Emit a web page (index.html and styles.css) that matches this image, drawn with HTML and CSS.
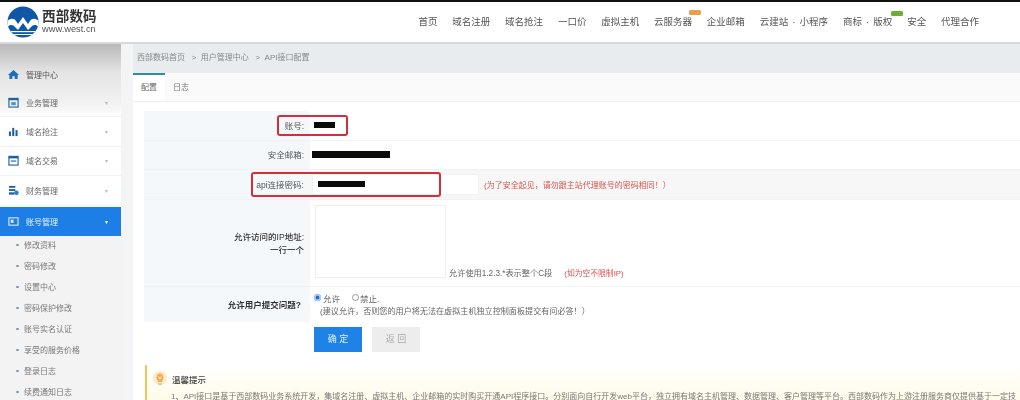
FILE: index.html
```html
<!DOCTYPE html>
<html lang="zh-CN">
<head>
<meta charset="utf-8">
<title>API接口配置</title>
<link rel="stylesheet" href="styles.css">
</head>
<body>
<div class="page">
  <header class="topbar">
    <div class="brand">
      <svg class="logo" viewBox="0 0 32 32" width="32" height="32">
        <defs><clipPath id="c"><circle cx="16" cy="16" r="15.5"/></clipPath></defs>
        <g clip-path="url(#c)">
          <rect width="32" height="32" fill="#0e56a6"/>
          <path d="M0 15 C4 12 7 12 9 15 L11 18 L16 11 L21 18 L23 15 C25 12 28 12 32 15 L32 21 C28 18 26 19 24 21 L21 24 L16 17 L11 24 L8 21 C6 19 4 18 0 21Z" fill="#fff"/>
          <rect y="25" width="32" height="1.2" fill="#fff"/>
          <rect y="28" width="32" height="1" fill="#fff"/>
        </g>
      </svg>
      <div class="brand-text">
        <div class="brand-name">西部数码</div>
        <div class="brand-url">www.west.cn</div>
      </div>
    </div>
    <nav class="nav">
      <a class="nav-item">首页</a>
      <a class="nav-item">域名注册</a>
      <a class="nav-item">域名抢注</a>
      <a class="nav-item">一口价</a>
      <a class="nav-item">虚拟主机</a>
      <a class="nav-item has-badge">云服务器<span class="badge badge-orange"></span></a>
      <a class="nav-item">企业邮箱</a>
      <a class="nav-item nav-wide">云建站 · 小程序</a>
      <a class="nav-item nav-wide has-badge">商标 · 版权<span class="badge badge-green"></span></a>
      <a class="nav-item">安全</a>
      <a class="nav-item">代理合作</a>
    </nav>
  </header>
  <div class="body-row">
    <aside class="sidebar">
      <div class="side-head">
        <svg class="side-icon" viewBox="0 0 12 12"><path d="M6 1 L12 6.500 L10.500 6.500 L10.500 11 L7.300 11 L7.300 8 L4.700 8 L4.700 11 L1.500 11 L1.500 6.500 L0 6.500Z" fill="#1c6fb8"/></svg>
        <span>管理中心</span>
      </div>
      <div class="side-item">
        <svg class="side-icon" viewBox="0 0 12 12"><rect x="1" y="1.500" width="10" height="9.500" fill="none" stroke="#1c5f9e" stroke-width="1.200"/><rect x="1" y="1.500" width="10" height="2" fill="#1c5f9e"/><rect x="3.500" y="5.500" width="5" height="3.500" fill="#5b93c5"/></svg>
        <span>业务管理</span><i class="caret">▾</i>
      </div>
      <div class="side-item">
        <svg class="side-icon" viewBox="0 0 12 12"><rect x="1" y="6" width="2.200" height="5" fill="#1c5f9e"/><rect x="4.600" y="2" width="2.200" height="9" fill="#1c5f9e"/><rect x="8.200" y="4.500" width="2.200" height="6.500" fill="#1c5f9e"/></svg>
        <span>域名抢注</span><i class="caret">▾</i>
      </div>
      <div class="side-item">
        <svg class="side-icon" viewBox="0 0 12 12"><rect x="1" y="1.500" width="10" height="9.500" fill="none" stroke="#1c5f9e" stroke-width="1.200"/><rect x="1" y="1.500" width="10" height="2.200" fill="#1c5f9e"/><rect x="3" y="6" width="6" height="1.200" fill="#1c5f9e"/></svg>
        <span>域名交易</span><i class="caret">▾</i>
      </div>
      <div class="side-item">
        <svg class="side-icon" viewBox="0 0 12 12"><rect x="1" y="1" width="7" height="2" fill="#1c5f9e"/><rect x="1" y="4.500" width="7" height="2" fill="#1c5f9e"/><rect x="1" y="8" width="6" height="2.500" fill="#1c5f9e"/><circle cx="9.200" cy="8.500" r="2.500" fill="#2a7fc4"/></svg>
        <span>财务管理</span><i class="caret">▾</i>
      </div>
      <div class="side-item active">
        <svg class="side-icon" viewBox="0 0 12 12"><rect x="1" y="2" width="10" height="8" fill="none" stroke="#dcebfb" stroke-width="1.200"/><rect x="3" y="4" width="3" height="3.500" fill="#dcebfb"/></svg>
        <span>账号管理</span><i class="caret">▾</i>
      </div>
      <ul class="sub">
        <li>修改资料</li>
        <li>密码修改</li>
        <li>设置中心</li>
        <li>密码保护修改</li>
        <li>账号实名认证</li>
        <li>享受的服务价格</li>
        <li>登录日志</li>
        <li>续费通知日志</li>
      </ul>
    </aside>
    <main class="main">
      <div class="crumbs">西部数码首页 &nbsp;&nbsp;&gt;&nbsp; 用户管理中心 &nbsp;&nbsp;&gt;&nbsp; API接口配置</div>
      <div class="tabs">
        <span class="tab current">配置</span>
        <span class="tab">日志</span>
      </div>
      <div class="content">
        <div class="form">
          <div class="row row-1">
            <div class="label">账号:</div>
            <div class="value"><span class="redact redact-user"></span></div>
          </div>
          <div class="row row-2">
            <div class="label">安全邮箱:</div>
            <div class="value"><span class="redact redact-mail"></span></div>
          </div>
          <div class="row row-3">
            <div class="label">api连接密码:</div>
            <div class="value value-pass">
              <span class="input-box"><span class="redact redact-pass"></span></span>
              <span class="warn warn-main">(为了安全起见，请勿跟主站代理账号的密码相同！）</span>
            </div>
          </div>
          <div class="row row-4">
            <div class="label label-stack"><b>允许访问的IP地址:</b><b>一行一个</b></div>
            <div class="value value-ip">
              <span class="textarea"></span>
              <span class="hint">允许使用1.2.3.*表示整个C段<span class="warn warn-gap">(如为空不限制IP)</span></span>
            </div>
          </div>
          <div class="row row-5">
            <div class="label label-ask"><b>允许用户提交问题?</b></div>
            <div class="value value-ask">
              <div class="radios">
                <span class="radio on"></span>允许
                <span class="radio off"></span>禁止.
              </div>
              <div class="ask-note">(建议允许，否则您的用户将无法在虚拟主机独立控制面板提交有问必答！）</div>
            </div>
          </div>
          <div class="outline outline-user"></div>
          <div class="outline outline-pass"></div>
        </div>
        <div class="actions">
          <span class="btn btn-primary">确 定</span>
          <span class="btn btn-muted">返 回</span>
        </div>
        <section class="notice">
          <div class="notice-title">
            <svg class="bulb" viewBox="0 0 14 16" width="14" height="16"><circle cx="7" cy="7" r="7" fill="#fdeccb"/><path d="M7 2.500 C9.500 2.500 10.500 4.500 10.500 6.500 C10.500 8.500 9.200 9.500 9 11 L5 11 C4.800 9.500 3.500 8.500 3.500 6.500 C3.500 4.500 4.500 2.500 7 2.500Z" fill="#f3ac55"/><path d="M5.700 5.500 L7 8 L8.300 5.500" fill="none" stroke="#fff" stroke-width=".9"/><rect x="5.300" y="12" width="3.400" height="2" fill="#f0c489"/></svg>
            <strong>温馨提示</strong>
          </div>
          <p>1、API接口是基于西部数码业务系统开发，集域名注册、虚拟主机、企业邮箱的实时购买开通API程序接口。分别面向自行开发web平台，独立拥有域名主机管理、数据管理、客户管理等平台。西部数码作为上游注册服务商仅提供基于一定技</p>
        </section>
      </div>
    </main>
  </div>
</div>
</body>
</html>
```
FILE: styles.css
```css
* { box-sizing: border-box; }
html, body { margin: 0; padding: 0; height: 400px; overflow: hidden; background: #fff; }
body { font-family: "Liberation Sans", "Noto Sans CJK SC", sans-serif; color: #555; font-size: 8.5px; }
.page { width: 1020px; height: 400px; display: flex; flex-direction: column; border-top: 2px solid #111; overflow: hidden; filter: blur(0.45px); }

.topbar { height: 42px; flex: none; display: flex; align-items: center; justify-content: space-between; border-bottom: 2px solid #d8d8d8; background: #fff; padding: 0 41px 2px 7px; }
.brand { display: flex; align-items: center; gap: 3px; margin-top: 2px; }
.logo { display: block; }
.brand-name { font-size: 13.500px; line-height: 15px; font-weight: 700; color: #333; letter-spacing: .2px; }
.brand-url { font-size: 9.300px; line-height: 11px; color: #555; }
.nav { display: flex; gap: 14.800px; align-items: center; }
.nav-item { font-size: 9.500px; color: #555; position: relative; white-space: nowrap; }
.nav-wide { word-spacing: 1.500px; }
.badge { position: absolute; top: -4px; width: 12px; height: 5px; border-radius: 1.500px; }
.badge-orange { background: #ef9d4a; right: -9px; }
.badge-green { background: #6cae2f; right: -11px; top: -3px; }

.body-row { flex: 1; display: flex; min-height: 0; }
.sidebar { width: 121px; flex: none; font-size: 8px; background: linear-gradient(#b9b9b9 0, #e4e4e4 28px, #f1f1f1 58px, #ffffff 74px, #ffffff 100%); }
.side-head { height: 44px; padding: 16px 0 0 8px; display: flex; align-items: center; gap: 7px; color: #555; }
.side-item { height: 29.400px; display: flex; align-items: center; gap: 7px; padding: 0 13px 0 8px; border-bottom: 1px solid #f2f2f2; color: #666; }
.side-item span { flex: 1; }
.side-icon { width: 11px; height: 11px; flex: none; }
.caret { font-style: normal; font-size: 6px; color: #bbb; }
.side-item.active { background: #1d7fe6; color: #eaf3fd; border-bottom: 0; margin-top: 1px; height: 29px; }
.side-item.active .caret { color: #fff; }
.sub { list-style: none; margin: 0; padding: 0 0 0 16px; background: #f3f3f3; }
.sub li { height: 21px; line-height: 19px; padding-left: 8px; color: #777; position: relative; }
.sub li::before { content: ""; position: absolute; left: 0; top: 8px; width: 2.500px; height: 2.500px; border-radius: 50%; background: #7e98b0; }

.main { flex: 1; min-width: 0; border-left: 12px solid #f3f4f5; }
.crumbs { height: 29px; line-height: 28px; background: #e9ecef; padding-left: 4px; color: #888; font-size: 8px; }
.tabs { height: 29px; display: flex; background: #fafafb; border-bottom: 1px solid #f0f1f2; }
.tab { width: 32px; text-align: center; line-height: 29px; color: #777; font-size: 8px; }
.tab.current { background: #fff; border-top: 2px solid #2f8d9c; line-height: 26px; color: #666; }
.content { padding: 9px 0 0 11px; background: #fff; height: 100%; }

.form { position: relative; }
.row { display: flex; border-bottom: 1px solid #f1f2f3; color: #444; }
.label { width: 166px; flex: none; background: #f5f8fb; display: flex; align-items: center; justify-content: flex-end; padding-right: 6px; color: #555; }
.label b { font-weight: 500; color: #333; }
.label-stack { flex-direction: column; align-items: flex-end; justify-content: center; gap: 1px; line-height: 12px; }
.label-ask { padding-right: 9px; padding-bottom: 1px; }
.label-ask b { font-weight: 700; }
.value { flex: 1; display: flex; align-items: center; padding-left: 2px; background: #fff; }
.row-1 .label, .row-2 .label, .row-3 .label, .row-1 .value, .row-2 .value { padding-bottom: 2px; }
.row-1 { height: 30px; }
.row-2 { height: 29px; }
.row-3 { height: 30px; }
.row-4 { height: 87px; }
.row-5 { height: 35px; border-bottom: 0; }
.redact { display: block; height: 7px; background: #0a0a0a; }
.redact-user { width: 21px; margin-left: 2px; height: 6px; }
.redact-mail { width: 78px; }
.redact-pass { width: 47px; height: 6px; margin-left: 5px; }
.value-pass { background: #f7f7f7; gap: 5px; }
.input-box { width: 167px; height: 21px; background: #fff; border: 1px solid #f1f1f1; display: flex; align-items: center; margin-bottom: 1px; }
.warn { color: #d9534f; }
.warn-main { font-size: 8px; white-space: nowrap; }
.warn-gap { margin-left: 12px; font-size: 7.800px; }
.value-ip { align-items: flex-end; padding: 0 0 8px 5px; gap: 3px; }
.textarea { width: 131px; height: 73px; border: 1px solid #eeeeee; background: #fff; }
.hint { color: #666; font-size: 8.200px; }
.value-ask { flex-direction: column; align-items: flex-start; justify-content: center; gap: 1px; color: #666; padding-bottom: 2px; }
.radios { display: flex; align-items: center; padding-left: 2px; }
.radio { width: 7px; height: 7px; border-radius: 50%; margin-right: 2px; }
.radio.on { background: #1d6fd8; box-shadow: inset 0 0 0 1.500px #bcd4f3; }
.radio.off { border: 1px solid #999; margin-left: 12px; margin-right: 1px; }
.ask-note { padding-left: 8px; font-size: 8.100px; white-space: nowrap; }
.outline { position: absolute; border: 2px solid #d32f3a; border-radius: 3px; }
.outline-user { left: 133px; top: 4px; width: 71px; height: 21px; }
.outline-pass { left: 107px; top: 61px; width: 190px; height: 25px; }

.actions { display: flex; gap: 10px; padding: 5px 0 0 170px; }
.btn { width: 48px; height: 25px; line-height: 25px; text-align: center; font-size: 9px; }
.btn-primary { background: #1e82e6; color: #e8f2fd; }
.btn-muted { background: #ededed; color: #aaa; }

.notice { margin-top: 13px; height: 60px; margin-left: 1px; border-left: 2px solid #f0c453; background: linear-gradient(#ffffff, #fffbe8 60%); padding: 6px 0 0 6px; white-space: nowrap; overflow: hidden; }
.notice-title { display: flex; align-items: center; gap: 5px; color: #444; }
.notice-title strong { font-weight: 500; }
.bulb { display: block; }
.notice p { margin: 3px 0 0 18px; color: #777; font-size: 8px; }
```
